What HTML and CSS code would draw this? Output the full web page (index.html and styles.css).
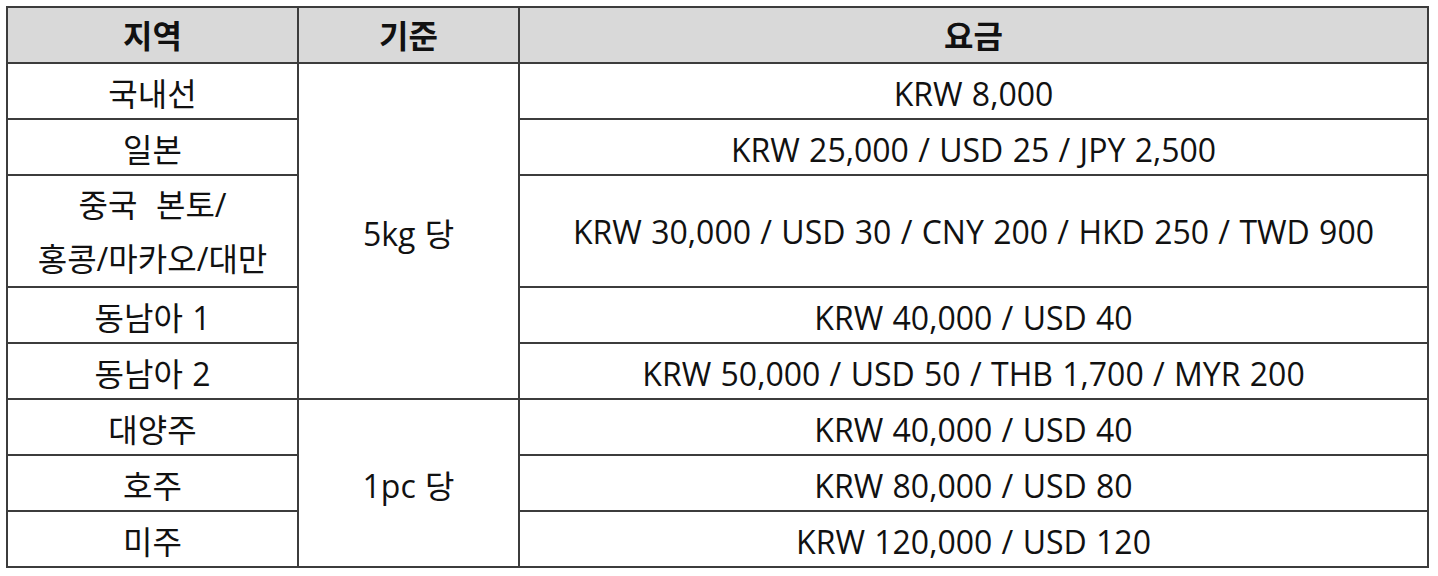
FILE: index.html
```html
<!DOCTYPE html>
<html lang="ko">
<head>
<meta charset="utf-8">
<link rel="stylesheet" href="styles.css">
</head>
<body>
<table class="rates">
  <colgroup>
    <col class="c1"><col class="c2"><col class="c3">
  </colgroup>
  <thead>
    <tr><th>지역</th><th>기준</th><th>요금</th></tr>
  </thead>
  <tbody>
    <tr><td>국내선</td><td rowspan="5">5kg 당</td><td>KRW 8,000</td></tr>
    <tr><td>일본</td><td>KRW 25,000 / USD 25 / JPY 2,500</td></tr>
    <tr class="tall"><td>중국&nbsp; 본토/<br>홍콩/마카오/대만</td><td>KRW 30,000 / USD 30 / CNY 200 / HKD 250 / TWD 900</td></tr>
    <tr><td>동남아 1</td><td>KRW 40,000 / USD 40</td></tr>
    <tr><td>동남아 2</td><td>KRW 50,000 / USD 50 / THB 1,700 / MYR 200</td></tr>
    <tr><td>대양주</td><td rowspan="3">1pc 당</td><td>KRW 40,000 / USD 40</td></tr>
    <tr><td>호주</td><td>KRW 80,000 / USD 80</td></tr>
    <tr><td>미주</td><td>KRW 120,000 / USD 120</td></tr>
  </tbody>
</table>
</body>
</html>
```

FILE: styles.css
```css
html, body {
  margin: 0;
  padding: 0;
  background: #ffffff;
}
body {
  padding: 6px 0 0 6px;
  font-family: "Open Sans", "Noto Sans CJK KR", sans-serif;
  color: #111;
}
.rates {
  border-collapse: collapse;
  width: 1423px;
  table-layout: fixed;
  font-size: 32px;
  font-weight: 400;
}
.c1 { width: 291px; }
.c2 { width: 221px; }
.c3 { width: auto; }
.rates th, .rates td {
  border: 2px solid #3c3c3c;
  text-align: center;
  vertical-align: middle;
  word-spacing: 1px;
}
.rates td {
  padding: 6px 0 0;
  height: 48px;
  line-height: 48px;
}
.rates th {
  background: #d9d9d9;
  font-weight: bold;
  padding: 1px 0 0;
  height: 53px;
  line-height: 53px;
}
.rates tr.tall td {
  padding-top: 2px;
  height: 108px;
  line-height: 54px;
}
```
